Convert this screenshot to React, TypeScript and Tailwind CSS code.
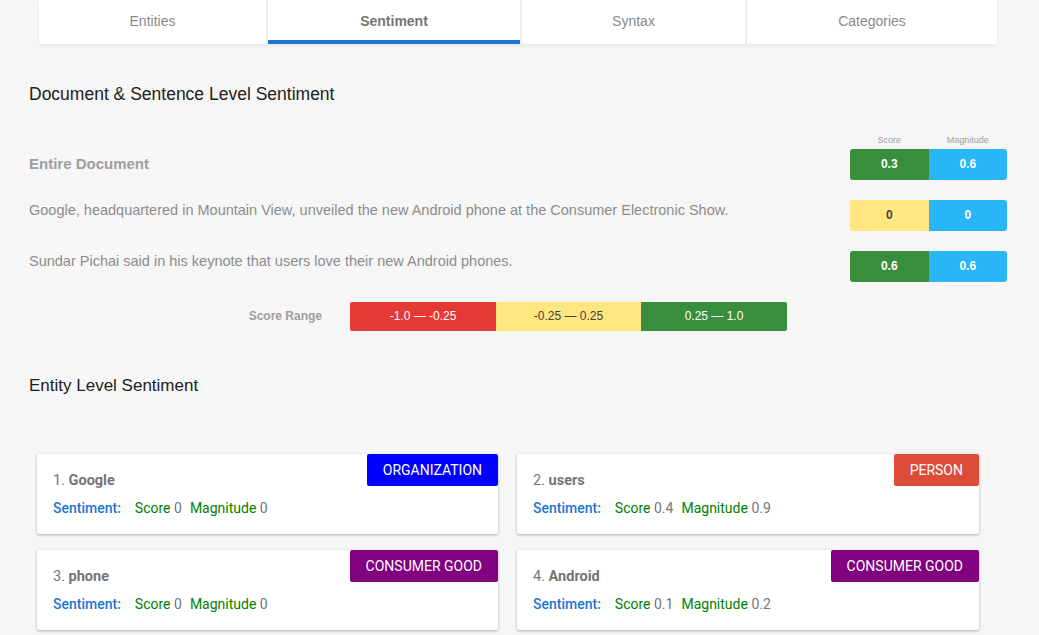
import React from "react";

interface Sentence {
  text: string;
  score: string;
  magnitude: string;
  tone: "pos" | "neutral";
}

interface Entity {
  name: string;
  type: string;
  badge: string;
  score: string;
  magnitude: string;
}

const tabs = ["Entities", "Sentiment", "Syntax", "Categories"];

const sentences: Sentence[] = [
  {
    text: "Google, headquartered in Mountain View, unveiled the new Android phone at the Consumer Electronic Show.",
    score: "0",
    magnitude: "0",
    tone: "neutral",
  },
  {
    text: "Sundar Pichai said in his keynote that users love their new Android phones.",
    score: "0.6",
    magnitude: "0.6",
    tone: "pos",
  },
];

const entities: Entity[] = [
  { name: "Google", type: "ORGANIZATION", badge: "bg-[#0000ff]", score: "0", magnitude: "0" },
  { name: "users", type: "PERSON", badge: "bg-[#dd4b39]", score: "0.4", magnitude: "0.9" },
  { name: "phone", type: "CONSUMER GOOD", badge: "bg-[#800080]", score: "0", magnitude: "0" },
  { name: "Android", type: "CONSUMER GOOD", badge: "bg-[#800080]", score: "0.1", magnitude: "0.2" },
];

function ScorePair({ score, magnitude, tone }: { score: string; magnitude: string; tone: "pos" | "neutral" }) {
  return (
    <div className="flex h-[31px] w-[157px] shrink-0 overflow-hidden rounded-[3px] text-[12px] font-bold">
      <div
        className={
          tone === "pos"
            ? "flex flex-1 items-center justify-center bg-[#388e3c] text-white"
            : "flex flex-1 items-center justify-center bg-[#ffe680] text-[#424242]"
        }
      >
        {score}
      </div>
      <div className="flex flex-1 items-center justify-center bg-[#29b6f6] text-white">{magnitude}</div>
    </div>
  );
}

function EntityCard({ e, i }: { e: Entity; i: number }) {
  return (
    <div className="relative h-[80px] rounded-[2px] bg-white px-4 pt-[16px] shadow-[0_1px_3px_rgba(0,0,0,0.3)]">
      <div className={`absolute right-0 top-0 flex h-[32px] items-center rounded-[2px] px-4 text-[14px] text-white ${e.badge}`}>
        {e.type}
      </div>
      <p className="text-[14.5px] text-[#757575]">
        {i + 1}. <span className="font-bold">{e.name}</span>
      </p>
      <p className="mt-[6px] text-[14px]">
        <span className="font-medium text-[#1976d2]">Sentiment:</span>
        <span className="ml-[14px] text-[#008000]">Score</span>
        <span className="text-[#757575]"> {e.score}</span>
        <span className="ml-[8px] text-[#008000]">Magnitude</span>
        <span className="text-[#757575]"> {e.magnitude}</span>
      </p>
    </div>
  );
}

export default function App() {
  return (
    <div className="min-h-[635px] w-[1039px] bg-[#f6f6f6] [font-family:'Liberation_Sans',Arial,sans-serif]">
      {/* tabs */}
      <div className="mx-[39px] flex h-[45px] w-[958px] border-b border-[#eeeeee] bg-white shadow-[0_1px_3px_rgba(0,0,0,0.06)]">
        {tabs.map((t, idx) => (
          <div
            key={t}
            className={
              "relative flex items-center justify-center pb-[2px] text-[14px] " +
              (idx === 1 ? "w-[254px] text-[14.5px] font-bold text-[#757575]" : idx === 0 ? "w-[229px] text-[#8a8a8a]" : idx === 2 ? "w-[225px] text-[#8a8a8a]" : "flex-1 text-[#8a8a8a]") +
              (idx < 3 ? " border-r-2 border-[#eeeeee]" : "")
            }
          >
            {t}
            {idx === 1 && <span className="absolute bottom-0 left-0 right-0 h-[4px] bg-[#1976d2]" />}
          </div>
        ))}
      </div>

      <div className="px-[29px]">
        <h2 className="mt-[36px] text-[17.5px] text-[#212121]">Document &amp; Sentence Level Sentiment</h2>

        <div className="mt-[27px] flex justify-end pr-[3px]">
          <div className="flex w-[157px] text-[9px] text-[#9e9e9e]">
            <span className="flex-1 text-center">Score</span>
            <span className="flex-1 text-center">Magnitude</span>
          </div>
        </div>

        <div className="mt-[1px] flex items-center justify-between pr-[3px]">
          <span className="text-[15px] font-bold text-[#9e9e9e]">Entire Document</span>
          <ScorePair score="0.3" magnitude="0.6" tone="pos" />
        </div>

        {sentences.map((s) => (
          <div key={s.text} className="mt-[20px] flex items-start justify-between pr-[3px]">
            <span className="text-[14.5px] text-[#8d8d8d]">{s.text}</span>
            <ScorePair score={s.score} magnitude={s.magnitude} tone={s.tone} />
          </div>
        ))}

        <div className="mt-[20px] flex items-center">
          <span className="w-[321px] pr-[28px] text-right text-[12px] font-bold text-[#9e9e9e]">Score Range</span>
          <div className="flex h-[29px] w-[437px] overflow-hidden rounded-[2px] text-[12px]">
            <div className="flex w-[146px] items-center justify-center bg-[#e53935] text-white">-1.0 — -0.25</div>
            <div className="flex w-[145px] items-center justify-center bg-[#ffe680] text-[#424242]">-0.25 — 0.25</div>
            <div className="flex flex-1 items-center justify-center bg-[#388e3c] text-white">0.25 — 1.0</div>
          </div>
        </div>

        <h2 className="mt-[42px] text-[17px] text-[#212121]">Entity Level Sentiment</h2>

        <div className="mt-[56px] grid w-[942px] grid-cols-[461px_462px] gap-x-[19px] gap-y-[16px] pl-[8px] [font-family:Roboto,sans-serif]">
          {entities.map((e, i) => (
            <EntityCard key={e.name} e={e} i={i} />
          ))}
        </div>
      </div>
    </div>
  );
}
